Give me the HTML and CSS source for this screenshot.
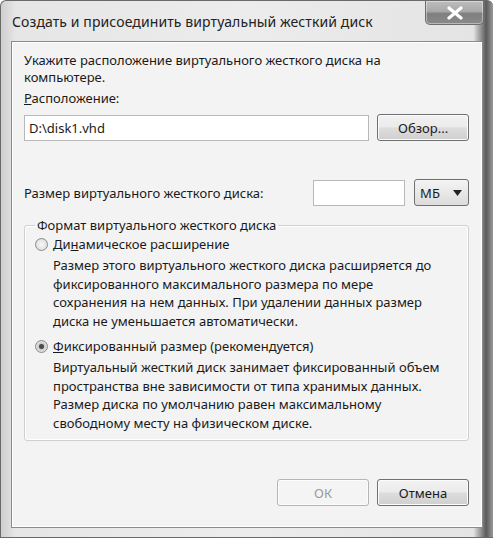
FILE: index.html
```html
<!DOCTYPE html>
<html lang="ru">
<head>
<meta charset="utf-8">
<title>Создать и присоединить виртуальный жесткий диск</title>
<link rel="stylesheet" href="styles.css">
</head>
<body>
<div class="window">
  <div class="titlebar">
    <div class="title">Создать и присоединить виртуальный жесткий диск</div>
    <div class="close"><svg width="18" height="14" viewBox="0 0 18 14"><path d="M3 2 L15 12 M15 2 L3 12" stroke="#fff" stroke-width="3.2" stroke-linecap="round"/></svg></div>
  </div>
  <div class="client">
    <p class="intro">Укажите расположение виртуального жесткого диска на<br>компьютере.</p>
    <div class="label"><u>Р</u>асположение:</div>
    <div class="row">
      <div class="input path">D:\disk1.vhd</div>
      <div class="btn">Обзор...</div>
    </div>
    <div class="row size-row">
      <div class="size-label">Размер виртуального жесткого диска:</div>
      <div class="input size"></div>
      <div class="select"><span>МБ</span><svg width="9" height="6" viewBox="0 0 9 6"><path d="M0 0 H9 L4.5 6 Z" fill="#222"/></svg></div>
    </div>
    <fieldset class="group">
      <legend>Формат виртуального жесткого диска</legend>
      <div class="option">
        <div class="radio-line"><span class="radio"></span><span>Ди<u>н</u>амическое расширение</span></div>
        <p class="desc">Размер этого виртуального жесткого диска расширяется до<br>фиксированного максимального размера по мере<br>сохранения на нем данных. При удалении данных размер<br>диска не уменьшается автоматически.</p>
      </div>
      <div class="option">
        <div class="radio-line"><span class="radio checked"></span><span><u>Ф</u>иксированный размер (рекомендуется)</span></div>
        <p class="desc">Виртуальный жесткий диск занимает фиксированный объем<br>пространства вне зависимости от типа хранимых данных.<br>Размер диска по умолчанию равен максимальному<br>свободному месту на физическом диске.</p>
      </div>
    </fieldset>
    <div class="footer">
      <div class="btn disabled">ОК</div>
      <div class="btn">Отмена</div>
    </div>
  </div>
</div>
</body>
</html>
```
FILE: styles.css
```css
* { box-sizing: border-box; }
html, body { margin: 0; padding: 0; background: #fff; }
body { font-family: "Noto Sans", "Open Sans", sans-serif; font-size: 13px; color: #1a1a1a; }

.window {
  width: 493px; height: 538px;
  display: flex; flex-direction: column;
  background: linear-gradient(90deg, #cfcfcf 0%, #e6e6e6 3%, #ececec 50%, #e4e4e4 96%, #5a5a5a 98.6%, #9a9a9a 100%);
  border: 1px solid #6a6a6a;
  border-right: none;
  border-radius: 6px 6px 0 0;
  padding: 0 10px 9px 10px;
}
.titlebar {
  height: 40px; flex: none;
  display: flex; align-items: flex-start; justify-content: space-between;
}
.title {
  font-size: 14px; color: #222; margin-top: 11px; margin-left: 1px; letter-spacing: 0.1px;
}
.close {
  width: 59px; height: 24px; margin-top: 0; margin-right: -1px;
  border: 1px solid #6d6d6d; border-top: none;
  border-radius: 0 0 5px 5px;
  background: linear-gradient(180deg, #bdbdbd 0%, #a9a9a9 45%, #7f7f7f 55%, #8a8a8a 100%);
  display: flex; align-items: center; justify-content: center;
  box-shadow: inset 0 0 0 1px rgba(255,255,255,0.4);
}
.client {
  flex: 1;
  background: #f3f3f3;
  border: 1px solid #8a8a8a;
  box-shadow: inset 0 0 0 1px #fff;
  padding: 10px 13px 0 12px;
  display: flex; flex-direction: column;
}
.intro { margin: 0; line-height: 17px; white-space: nowrap; }
.label { margin-top: 4px; line-height: 16px; }
.row { display: flex; align-items: center; }
.input {
  background: #fff; border: 1px solid #b8b8b8; height: 26px;
  display: flex; align-items: center; padding-left: 4px;
}
.path { width: 346px; margin-top: 8px; }
.btn {
  width: 92px; height: 27px; margin-left: 8px;
  border: 1px solid #707070; border-radius: 3px;
  background: linear-gradient(180deg, #f2f2f2 0%, #ebebeb 48%, #dddddd 52%, #cfcfcf 100%);
  display: flex; align-items: center; justify-content: center;
  box-shadow: inset 0 0 0 1px #fcfcfc;
}
.row .btn { margin-top: 8px; }
.size-row { margin-top: 38px; }
.size-label { width: 290px; padding-top: 1px; }
.size { width: 92px; }
.select {
  width: 55px; height: 27px; margin-left: 9px;
  border: 1px solid #707070; border-radius: 3px;
  background: linear-gradient(180deg, #f4f4f4 0%, #e8e8e8 50%, #dcdcdc 100%);
  display: flex; align-items: center; justify-content: space-between; padding: 0 6px 0 5px;
}
.group {
  margin: 11px 0 0 0; padding: 3px 10px 8px 10px;
  border: 1px solid #d0d0d0; border-radius: 3px;
  box-shadow: inset 0 0 0 1px #fff;
}
.group legend { padding: 0 2px; margin-left: 0; line-height: 16px; }
.option { margin-top: 0; }
.option + .option { margin-top: 8px; }
.radio-line { display: flex; align-items: center; gap: 5px; line-height: 16px; }
.radio {
  width: 13px; height: 13px; border-radius: 50%;
  border: 1px solid #8a8a8a;
  background: radial-gradient(circle at 50% 50%, #f6f6f6 0%, #d8d8d8 100%);
  flex: none;
}
.radio.checked {
  background: radial-gradient(circle at 50% 50%, #444 0%, #555 28%, #d0d0d0 40%, #eee 100%);
}
.desc { margin: 4px 0 0 18px; line-height: 18.5px; white-space: nowrap; }
.footer { margin-top: auto; margin-bottom: 21px; display: flex; justify-content: flex-end; }
.footer .btn { margin-left: 8px; }
.btn.disabled { color: #9a9a9a; border-color: #b5b5b5; background: #f4f4f4; }
```
